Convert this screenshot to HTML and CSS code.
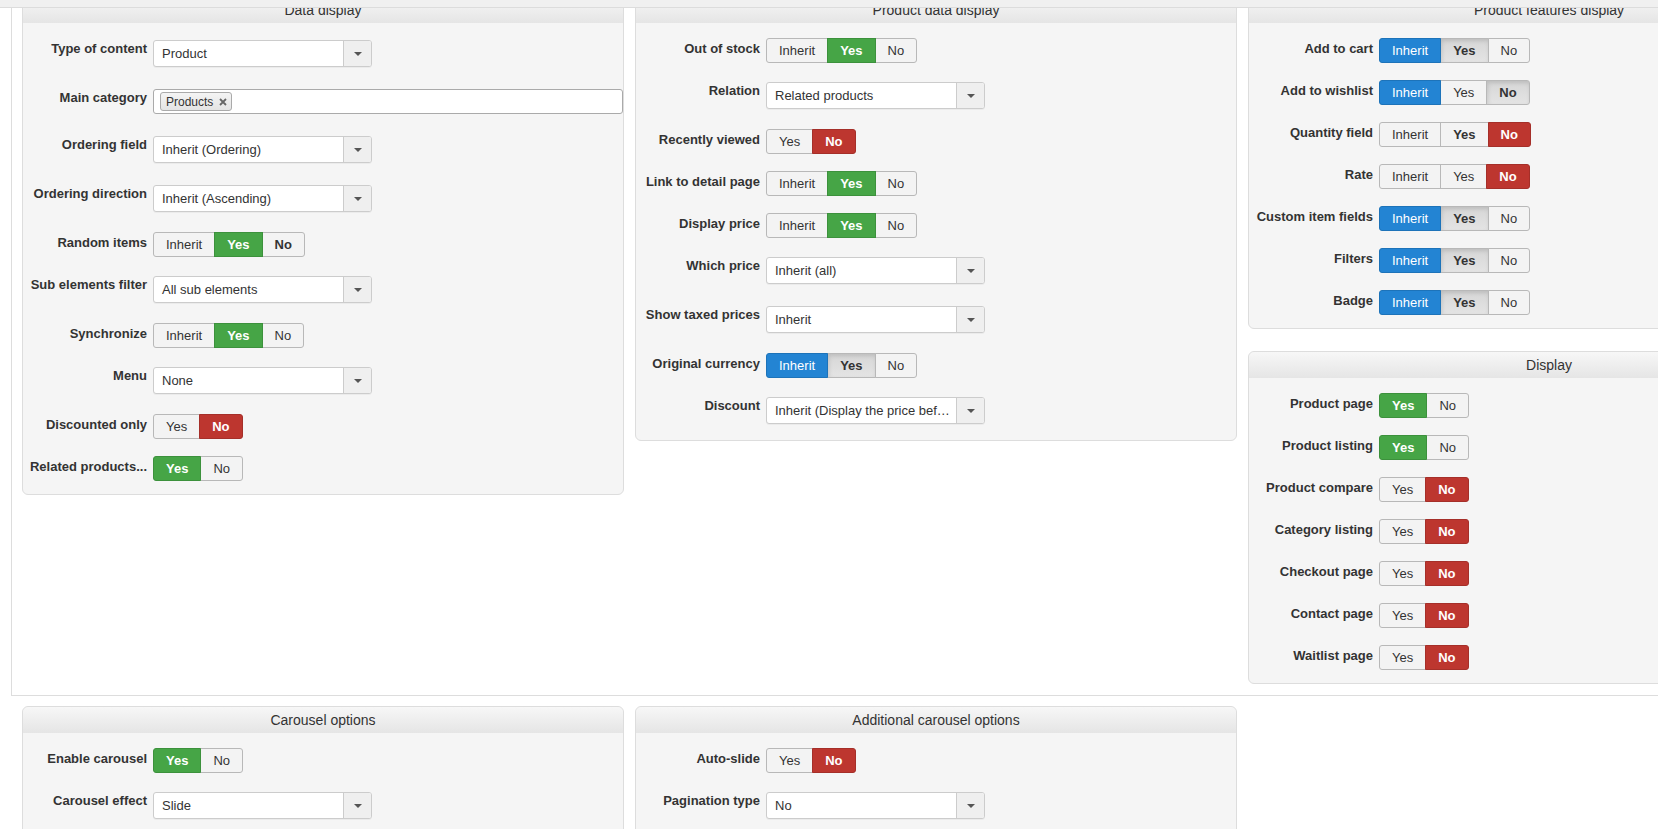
FILE: index.html
```html
<!DOCTYPE html>
<html>
<head>
<meta http-equiv="Content-Type" content="text/html; charset=UTF-8">
<title>Module options</title>
<link rel="stylesheet" href="styles.css">
</head>
<body>
<div class="toolbar"></div>

<div class="tab-pane">
<div class="columns">

<div class="panel">
<div class="panel-head">Data display</div>
<div class="panel-body">
	<div class="row sel"><label class="lbl">Type of content</label><div class="select"><span class="val">Product</span><span class="caret"></span></div></div>
	<div class="row sel"><label class="lbl">Main category</label>
		<div class="tags"><span class="tag">Products<svg width="8" height="8" viewBox="0 0 8 8"><path d="M1 1L7 7M7 1L1 7" stroke="#666" stroke-width="1.8"/></svg></span></div>
	</div>
	<div class="row sel"><label class="lbl">Ordering field</label><div class="select"><span class="val">Inherit (Ordering)</span><span class="caret"></span></div></div>
	<div class="row sel"><label class="lbl">Ordering direction</label><div class="select"><span class="val">Inherit (Ascending)</span><span class="caret"></span></div></div>
	<div class="row"><label class="lbl">Random items</label><div class="toggle"><span>Inherit</span><span class="green">Yes</span><span class="strong">No</span></div></div>
	<div class="row sel"><label class="lbl">Sub elements filter</label><div class="select"><span class="val">All sub elements</span><span class="caret"></span></div></div>
	<div class="row"><label class="lbl">Synchronize</label><div class="toggle"><span>Inherit</span><span class="green">Yes</span><span>No</span></div></div>
	<div class="row sel"><label class="lbl">Menu</label><div class="select"><span class="val">None</span><span class="caret"></span></div></div>
	<div class="row"><label class="lbl">Discounted only</label><div class="toggle"><span>Yes</span><span class="red">No</span></div></div>
	<div class="row"><label class="lbl">Related products...</label><div class="toggle"><span class="green">Yes</span><span>No</span></div></div>
</div>
</div>

<div class="panel">
<div class="panel-head">Product data display</div>
<div class="panel-body">
	<div class="row"><label class="lbl">Out of stock</label><div class="toggle"><span>Inherit</span><span class="green">Yes</span><span>No</span></div></div>
	<div class="row sel"><label class="lbl">Relation</label><div class="select"><span class="val">Related products</span><span class="caret"></span></div></div>
	<div class="row"><label class="lbl">Recently viewed</label><div class="toggle"><span>Yes</span><span class="red">No</span></div></div>
	<div class="row"><label class="lbl">Link to detail page</label><div class="toggle"><span>Inherit</span><span class="green">Yes</span><span>No</span></div></div>
	<div class="row"><label class="lbl">Display price</label><div class="toggle"><span>Inherit</span><span class="green">Yes</span><span>No</span></div></div>
	<div class="row sel"><label class="lbl">Which price</label><div class="select"><span class="val">Inherit (all)</span><span class="caret"></span></div></div>
	<div class="row sel"><label class="lbl">Show taxed prices</label><div class="select"><span class="val">Inherit</span><span class="caret"></span></div></div>
	<div class="row"><label class="lbl">Original currency</label><div class="toggle"><span class="blue">Inherit</span><span class="pressed">Yes</span><span>No</span></div></div>
	<div class="row sel"><label class="lbl">Discount</label><div class="select"><span class="val">Inherit (Display the price before discount)</span><span class="caret"></span></div></div>
</div>
</div>

<div class="stack">
<div class="panel">
<div class="panel-head">Product features display</div>
<div class="panel-body">
	<div class="row"><label class="lbl">Add to cart</label><div class="toggle"><span class="blue">Inherit</span><span class="pressed">Yes</span><span>No</span></div></div>
	<div class="row"><label class="lbl">Add to wishlist</label><div class="toggle"><span class="blue">Inherit</span><span>Yes</span><span class="pressed">No</span></div></div>
	<div class="row"><label class="lbl">Quantity field</label><div class="toggle"><span>Inherit</span><span class="strong">Yes</span><span class="red">No</span></div></div>
	<div class="row"><label class="lbl">Rate</label><div class="toggle"><span>Inherit</span><span>Yes</span><span class="red">No</span></div></div>
	<div class="row"><label class="lbl">Custom item fields</label><div class="toggle"><span class="blue">Inherit</span><span class="pressed">Yes</span><span>No</span></div></div>
	<div class="row"><label class="lbl">Filters</label><div class="toggle"><span class="blue">Inherit</span><span class="pressed">Yes</span><span>No</span></div></div>
	<div class="row"><label class="lbl">Badge</label><div class="toggle"><span class="blue">Inherit</span><span class="pressed">Yes</span><span>No</span></div></div>
</div>
</div>

<div class="panel">
<div class="panel-head">Display</div>
<div class="panel-body">
	<div class="row"><label class="lbl">Product page</label><div class="toggle"><span class="green">Yes</span><span>No</span></div></div>
	<div class="row"><label class="lbl">Product listing</label><div class="toggle"><span class="green">Yes</span><span>No</span></div></div>
	<div class="row"><label class="lbl">Product compare</label><div class="toggle"><span>Yes</span><span class="red">No</span></div></div>
	<div class="row"><label class="lbl">Category listing</label><div class="toggle"><span>Yes</span><span class="red">No</span></div></div>
	<div class="row"><label class="lbl">Checkout page</label><div class="toggle"><span>Yes</span><span class="red">No</span></div></div>
	<div class="row"><label class="lbl">Contact page</label><div class="toggle"><span>Yes</span><span class="red">No</span></div></div>
	<div class="row"><label class="lbl">Waitlist page</label><div class="toggle"><span>Yes</span><span class="red">No</span></div></div>
</div>
</div>
</div>

</div>
</div>

<div class="columns bottom">
<div class="panel">
<div class="panel-head">Carousel options</div>
<div class="panel-body">
	<div class="row"><label class="lbl">Enable carousel</label><div class="toggle"><span class="green">Yes</span><span>No</span></div></div>
	<div class="row sel"><label class="lbl">Carousel effect</label><div class="select"><span class="val">Slide</span><span class="caret"></span></div></div>
</div>
</div>

<div class="panel">
<div class="panel-head">Additional carousel options</div>
<div class="panel-body">
	<div class="row"><label class="lbl">Auto-slide</label><div class="toggle"><span>Yes</span><span class="red">No</span></div></div>
	<div class="row sel"><label class="lbl">Pagination type</label><div class="select"><span class="val">No</span><span class="caret"></span></div></div>
</div>
</div>
</div>
</body>
</html>
```

FILE: styles.css
```css
html, body {
	margin: 0;
	height: 100%;
	overflow: hidden;
}
body {
	background: #fff;
	color: #333;
	font-family: "Liberation Sans", Arial, Helvetica, sans-serif;
	font-size: 13px;
	line-height: 18px;
}
.toolbar {
	position: fixed;
	top: 0;
	left: 0;
	right: 0;
	height: 7px;
	background: #f0f0f0;
	border-bottom: 1px solid #dcdcdc;
	z-index: 10;
}
/* page is scrolled a few pixels, headers slide under the toolbar */
.tab-pane {
	margin: -4px 0 0 11px;
	padding: 0 0 11px 10px;
	border-left: 1px solid #ddd;
	border-bottom: 1px solid #ddd;
}
.columns {
	display: grid;
	grid-template-columns: 602px 602px 602px;
	column-gap: 11px;
	align-items: start;
}
.bottom {
	padding: 10px 0 0 22px;
}
.stack {
	display: flex;
	flex-direction: column;
	gap: 22px;
}
.panel {
	box-sizing: border-box;
	width: 602px;
	background: #f5f5f5;
	border: 1px solid #ddd;
	border-radius: 6px;
}
.panel-head {
	height: 26px;
	line-height: 26px;
	text-align: center;
	font-size: 14px;
	color: #333;
	background: linear-gradient(#f7f7f7, #e5e5e5);
	border-radius: 6px 6px 0 0;
}
.panel-body {
	padding: 15px 0 13px 0;
}
.row {
	display: flex;
	align-items: flex-start;
	margin-bottom: 17px;
}
.row:last-child {
	margin-bottom: 0;
}
.row.sel {
	padding: 2px 0 3px 0;
}
.lbl {
	flex: none;
	box-sizing: border-box;
	width: 130px;
	padding: 2px 6px 0 5px;
	text-align: right;
	font-weight: bold;
	font-size: 13px;
	line-height: 18px;
	white-space: nowrap;
	overflow: hidden;
}
.sel .lbl {
	padding-top: 0;
}

/* chosen-like select */
.select {
	display: flex;
	box-sizing: border-box;
	width: 219px;
	height: 27px;
	background: #fff;
	border: 1px solid #ccc;
	border-radius: 3px;
	box-shadow: 0 1px 0 rgba(0, 0, 0, 0.04);
}
.select .val {
	flex: 1;
	min-width: 0;
	padding: 0 0 0 8px;
	line-height: 25px;
	white-space: nowrap;
	overflow: hidden;
	text-overflow: ellipsis;
}
.select .caret {
	flex: none;
	width: 27px;
	display: flex;
	align-items: center;
	justify-content: center;
	background: #efefef;
	border-left: 1px solid #ccc;
	border-radius: 0 2px 2px 0;
}
.select .caret:after {
	content: "";
	border-top: 4px solid #555;
	border-left: 4px solid transparent;
	border-right: 4px solid transparent;
}

.tags {
	box-sizing: border-box;
	width: 471px;
	height: 25px;
	background: #fff;
	border: 1px solid #aaa;
	border-radius: 3px;
}
.tag {
	display: inline-flex;
	align-items: center;
	gap: 6px;
	box-sizing: border-box;
	height: 19px;
	margin: 2px 0 0 6px;
	padding: 0 4px 0 5px;
	font-size: 12px;
	background: linear-gradient(#f4f4f4, #e4e4e4);
	border: 1px solid #aaa;
	border-radius: 3px;
}

/* yes / no button groups */
.toggle {
	display: flex;
}
.toggle span {
	box-sizing: border-box;
	height: 25px;
	padding: 0 12px;
	line-height: 23px;
	margin-left: -1px;
	background: #f3f3f3;
	border: 1px solid #b8b8b8;
	color: #333;
}
.toggle span:first-child {
	margin-left: 0;
	border-radius: 3px 0 0 3px;
}
.toggle span:last-child {
	border-radius: 0 3px 3px 0;
}
.toggle .strong {
	font-weight: bold;
}
.toggle .green,
.toggle .red,
.toggle .blue {
	position: relative;
	color: #fff;
}
.toggle .green,
.toggle .red {
	font-weight: bold;
}
.toggle .green {
	background: #46a546;
	border-color: #3c913c;
}
.toggle .red {
	background: #bd362f;
	border-color: #a52f29;
}
.toggle .blue {
	background: #2384d3;
	border-color: #1d73b9;
}
.toggle .pressed {
	font-weight: bold;
	background: linear-gradient(#d6d6d6, #e4e4e4);
	box-shadow: inset 1px 2px 4px rgba(0, 0, 0, 0.12);
}
```
